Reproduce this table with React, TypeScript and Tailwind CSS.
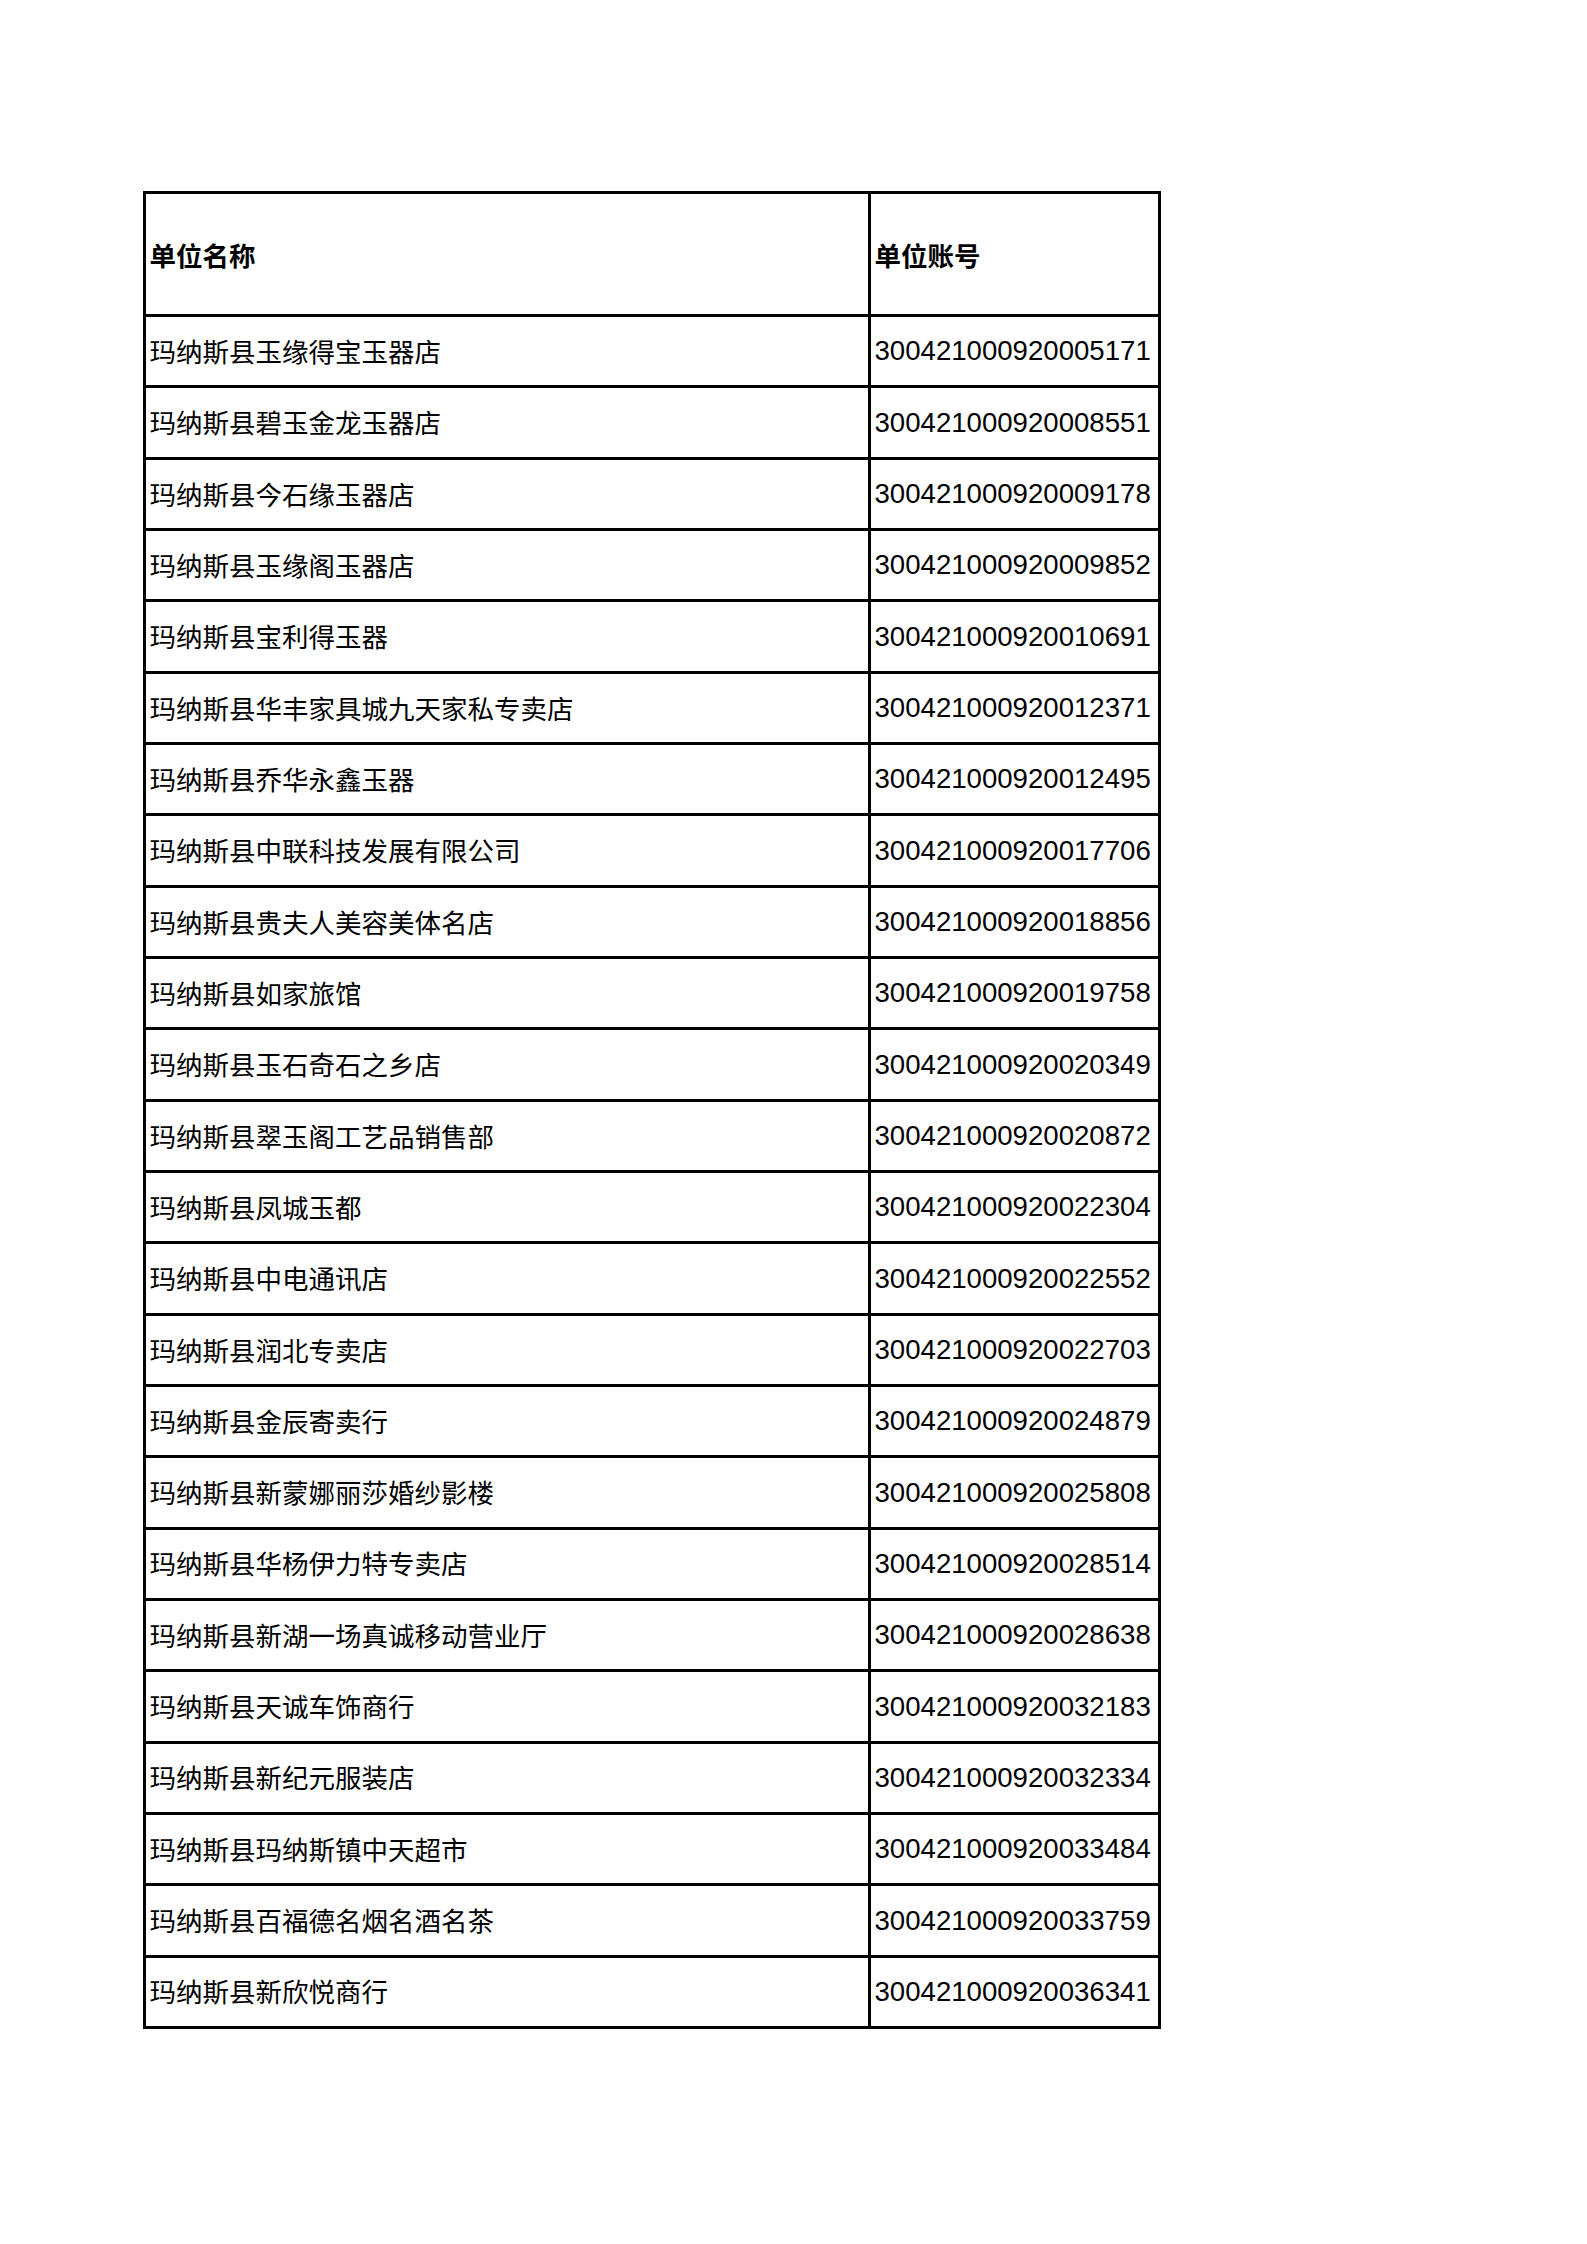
const rows = [
  { name: "玛纳斯县玉缘得宝玉器店", account: "300421000920005171" },
  { name: "玛纳斯县碧玉金龙玉器店", account: "300421000920008551" },
  { name: "玛纳斯县今石缘玉器店", account: "300421000920009178" },
  { name: "玛纳斯县玉缘阁玉器店", account: "300421000920009852" },
  { name: "玛纳斯县宝利得玉器", account: "300421000920010691" },
  { name: "玛纳斯县华丰家具城九天家私专卖店", account: "300421000920012371" },
  { name: "玛纳斯县乔华永鑫玉器", account: "300421000920012495" },
  { name: "玛纳斯县中联科技发展有限公司", account: "300421000920017706" },
  { name: "玛纳斯县贵夫人美容美体名店", account: "300421000920018856" },
  { name: "玛纳斯县如家旅馆", account: "300421000920019758" },
  { name: "玛纳斯县玉石奇石之乡店", account: "300421000920020349" },
  { name: "玛纳斯县翠玉阁工艺品销售部", account: "300421000920020872" },
  { name: "玛纳斯县凤城玉都", account: "300421000920022304" },
  { name: "玛纳斯县中电通讯店", account: "300421000920022552" },
  { name: "玛纳斯县润北专卖店", account: "300421000920022703" },
  { name: "玛纳斯县金辰寄卖行", account: "300421000920024879" },
  { name: "玛纳斯县新蒙娜丽莎婚纱影楼", account: "300421000920025808" },
  { name: "玛纳斯县华杨伊力特专卖店", account: "300421000920028514" },
  { name: "玛纳斯县新湖一场真诚移动营业厅", account: "300421000920028638" },
  { name: "玛纳斯县天诚车饰商行", account: "300421000920032183" },
  { name: "玛纳斯县新纪元服装店", account: "300421000920032334" },
  { name: "玛纳斯县玛纳斯镇中天超市", account: "300421000920033484" },
  { name: "玛纳斯县百福德名烟名酒名茶", account: "300421000920033759" },
  { name: "玛纳斯县新欣悦商行", account: "300421000920036341" },
];

const cjk = "font-['Noto_Sans_CJK_SC','Noto_Sans',sans-serif]";
const num = "font-['Liberation_Sans','Noto_Sans_CJK_SC',sans-serif]";

export default function App() {
  return (
    <div className="min-h-[2244px] w-full bg-white pt-[191px] pl-[142.5px] text-black">
      <div className="w-[1018px] border-[3px] border-black">
        {/* header */}
        <div className="flex h-[120px]">
          <div className={`flex w-[725px] shrink-0 items-center border-r-[3px] border-black pl-[4px] pt-[3px] text-[26.5px] font-bold leading-none ${cjk}`}>
            单位名称
          </div>
          <div className={`flex flex-1 items-center pl-[4px] pt-[3px] text-[26.5px] font-bold leading-none ${cjk}`}>
            单位账号
          </div>
        </div>

        {rows.map((row, idx) => (
          <div className="flex h-[71.33px] border-t-[3px] border-black" key={idx}>
            <div className={`flex w-[725px] shrink-0 items-center border-r-[3px] border-black pl-[4px] text-[26.5px] leading-none ${cjk}`}>
              {row.name}
            </div>
            <div className={`flex flex-1 items-center pl-[4px] text-[27.6px] leading-none ${num}`}>
              {row.account}
            </div>
          </div>
        ))}
      </div>
    </div>
  );
}
